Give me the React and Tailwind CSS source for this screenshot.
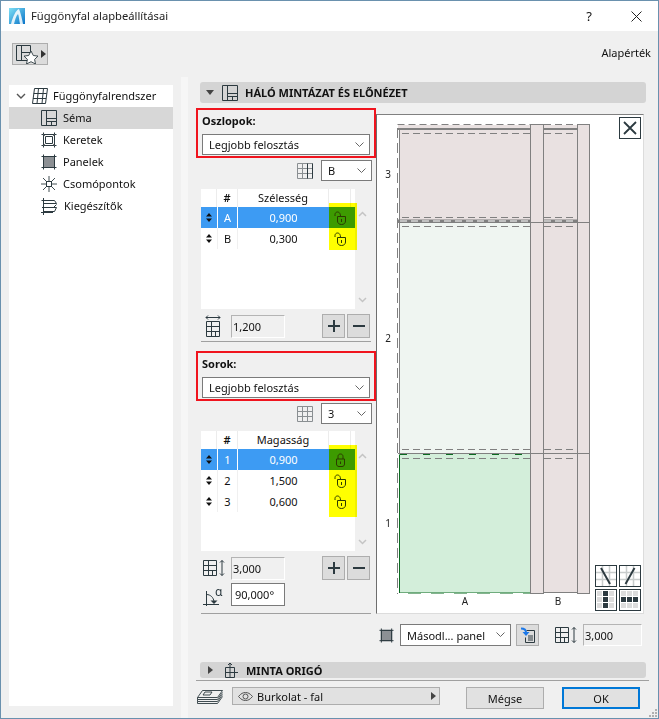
import React from "react";

const INK = "#2c3a40";

const Chevron = ({ className = "" }) => (
  <svg width="9" height="6" viewBox="0 0 9 6" className={className}>
    <polyline points="0.5,0.5 4.500,4.500 8.500,0.500" fill="none" stroke="#666" strokeWidth="1" />
  </svg>
);

const SchemaIcon = ({ size = 16 }) => (
  <svg width={size} height={size} viewBox="0 0 16 16" fill="none" stroke={INK}>
    <path d="M.5.5h15v15H.5zM5.500.5v15M5.500 8.500h10M10.500 11.500v4M5.500 11.500h10" />
  </svg>
);

const TreeRootIcon = () => (
  <svg width="17" height="17" viewBox="0 0 17 17" fill="none" stroke={INK}>
    <path d="M3.500.5h13l-2 15H1.500zM7.500.5l-1.500 15M12.500.5l-1.500 15M2.700 5.500h13M2 10.500h13" />
  </svg>
);

const FramesIcon = () => (
  <svg width="16" height="16" viewBox="0 0 16 16" fill="none" stroke={INK}>
    <path d="M2.500.5v15M13.500.5v15M.5 2.500h15M.5 13.500h15M4.500 4.500h7v7h-7z" />
    <path d="M2.500 2.500l2 2M13.500 2.500l-2 2M2.500 13.500l2-2M13.500 13.500l-2-2" stroke="#777" />
  </svg>
);

const PanelIcon = ({ size = 16 }) => (
  <svg width={size} height={size} viewBox="0 0 16 16" fill="none" stroke={INK}>
    <rect x="2.500" y="2.500" width="11" height="11" fill="#8c9094" />
    <path d="M2.500.5v15M13.500.5v15M.5 2.500h15M.5 13.500h15" />
  </svg>
);

const NodesIcon = () => (
  <svg width="16" height="16" viewBox="0 0 16 16" fill="none" stroke={INK}>
    <rect x="5.500" y="5.500" width="5" height="5" fill="#fff" />
    <path d="M8 0v5.500M8 10.500v5.500M0 8h5.500M10.500 8h5.500M2 2l3.500 3.500M14 2l-3.500 3.500M2 14l3.500-3.500M14 14l-3.500-3.500" strokeWidth=".9" />
  </svg>
);

const ExtrasIcon = () => (
  <svg width="17" height="17" viewBox="0 0 17 17" fill="none" stroke={INK}>
    <path d="M2.500 0v17M.5 2.500h13l2 3H3M15.500 6.500l-3 3H1M2.500 9.500h13l-2 4H3M0 14.500h12" />
  </svg>
);

const GridIcon = ({ cols }) => (
  <svg width="16" height="16" viewBox="0 0 16 16" fill="none" stroke="#8a8f92">
    <path d="M.5.5h15v15H.5zM5.500.5v15M10.500.5v15M.5 5.500h15M.5 10.500h15" />
    {cols && <path d="M15.500.5v15M10.500.5v15" stroke={INK} />}
  </svg>
);

const WidthTotalIcon = () => (
  <svg width="16" height="22" viewBox="0 0 16 22" fill="none" stroke={INK}>
    <path d="M1 2.500h14M3 .5l-2 2 2 2M13 .5l2 2-2 2" />
    <path d="M1.500 6.500h13v15h-13zM1.500 11.500h13M1.500 16.500h13M6.500 6.500v15M10.500 16.500v5" />
  </svg>
);

const HeightTotalIcon = () => (
  <svg width="22" height="16" viewBox="0 0 22 16" fill="none" stroke={INK}>
    <path d="M.5.500h13v15H.5zM.5 5.500h13M.5 10.500h13M5.500.500v15M9.500 10.500v5" />
    <path d="M19 .500v15M17 2.500l2-2 2 2M17 13.500l2 2 2-2" />
  </svg>
);

const AngleIcon = () => (
  <svg width="22" height="23" viewBox="0 -4 22 23" fill="none" stroke={INK}>
    <path d="M0 17.500h16M3.500 4v15M3.500 7.500c4 0 7 3 7.500 7" />
    <path d="M7.500 13.500h7l-3.500 3.500z" fill={INK} stroke="none" />
    <text x="12" y="9" fontSize="12" fill={INK} stroke="none" fontFamily="'Noto Sans', sans-serif">α</text>
  </svg>
);

const LockIcon = ({ open }) => (
  <svg width="13" height="14" viewBox="0 0 13 14" fill="none" stroke={INK}>
    {open ? (
      <path d="M1 5V3.500C1 2 2.200 1 3.500 1S6 2 6.300 3.500l.2 1.500" />
    ) : (
      <path d="M4 6V3.500C4 2 5 1 6.500 1S9 2 9 3.500V6" />
    )}
    <path
      d={open ? "M3.500 5.500h8v4.500c0 2-1.500 3.500-4 3.500s-4-1.500-4-3.500z" : "M2.500 6h8v5c0 1.500-1 2.500-2.500 2.500H5c-1.500 0-2.500-1-2.500-2.500z"}
    />
    <path d={open ? "M7.500 8v3" : "M6.500 8.500v2.500"} />
  </svg>
);

const SortHandle = () => (
  <svg width="6" height="9" viewBox="0 0 6 9" fill="#111">
    <path d="M3 0l3 3.500H0zM0 5.500h6L3 9z" />
  </svg>
);

const Select = ({ value, className = "" }) => (
  <div className={`flex h-[21px] items-center justify-between border border-[#7a7a7a] bg-white pl-[6px] pr-[5px] ${className}`}>
    <span>{value}</span>
    <Chevron />
  </div>
);

const ReadOnlyField = ({ value, className = "" }) => (
  <div className={`flex h-[23px] items-center border border-t-[#b4b4b4] border-l-[#b4b4b4] border-r-white border-b-white bg-[#f0f0f0] pl-[1px] ${className}`}>
    {value}
  </div>
);

const PlusMinus = () => (
  <div className="ml-auto flex gap-[2px]">
    <button className="flex h-[24px] w-[23px] items-center justify-center border border-[#adadad] bg-[#dcdcdc]">
      <svg width="12" height="12" viewBox="0 0 12 12" fill={INK}><path d="M5 0h2v5h5v2H7v5H5V7H0V5h5z" /></svg>
    </button>
    <button className="flex h-[24px] w-[23px] items-center justify-center border border-[#adadad] bg-[#dcdcdc]">
      <svg width="12" height="2" viewBox="0 0 12 2" fill={INK}><path d="M0 0h12v2H0z" /></svg>
    </button>
  </div>
);

const ValueTable = ({ title, rows }) => (
  <div className="relative ml-[5px] flex">
    <div className="h-[120px] w-[154px] bg-white">
      <div className="grid h-[18px] grid-cols-[16px_21px_91px_22px] text-center leading-[18px]">
        <div className="border-r border-[#ececec]" />
        <div className="border-r border-[#ececec] font-semibold">#</div>
        <div className="border-r border-[#ececec]">{title}</div>
        <div className="border-r border-[#ececec]" />
      </div>
      {rows.map((row, i) => (
        <div
          key={row.id}
          className={`grid h-[21px] grid-cols-[16px_21px_91px_22px] items-center text-center ${i === 0 ? "bg-[#3d9bf3] text-white" : ""}`}
        >
          <div className="flex h-full items-center justify-center">
            <SortHandle />
          </div>
          <div className={`flex h-full items-center justify-center border-x ${i === 0 ? "border-white" : "border-[#f0f0f0]"}`}>{row.id}</div>
          <div>{row.value}</div>
          <div className="flex justify-center pl-[1px]">
            <LockIcon open={row.open} />
          </div>
        </div>
      ))}
    </div>
    {/* yellow highlighter stroke over the lock column */}
    <div
      className={`absolute left-[128px] top-[14px] w-[28px] bg-[#ffff00] mix-blend-multiply ${rows.length === 3 ? "h-[72px]" : "h-[47px]"}`}
    />
    <div className="ml-[3px] flex h-[120px] w-[9px] flex-col justify-between pb-[6px] pt-[22px]">
      <svg width="9" height="6" viewBox="0 0 9 6"><polyline points="1,5 4.500,1.500 8,5" fill="none" stroke="#c4c4c4" strokeWidth="1.500" /></svg>
      <svg width="9" height="6" viewBox="0 0 9 6"><polyline points="1,1 4.500,4.500 8,1" fill="none" stroke="#c4c4c4" strokeWidth="1.500" /></svg>
    </div>
  </div>
);

const RedBox = ({ label }) => (
  <div className="h-[50px] w-[180px] border-2 border-[#f0141e] px-[4px]">
    <div className="flex h-[20px] items-center font-bold">{label}</div>
    <Select value="Legjobb felosztás" className="mt-[4px]" />
  </div>
);

const PreviewDrawing = () => {
  const line = "#808080";
  const dash = { stroke: line, strokeDasharray: "7 4", fill: "none" };
  return (
    <svg width="266" height="498" viewBox="377 115 266 498" className="block">
      {/* filled panels */}
      <rect x="398" y="125" width="179" height="4" fill="#e9e1e1" />
      <rect x="399" y="129" width="132" height="92" fill="#e9e1e1" />
      <rect x="399" y="223" width="132" height="230" fill="#eff5f1" />
      <rect x="399" y="454" width="132" height="139" fill="#d3eeda" />
      <path d="M399.500 454.500v138.500h131" stroke="#0a6a20" fill="none" />
      <path d="M400 454.500h130" stroke="#0a6a20" strokeDasharray="7 16" fill="none" />
      <rect x="530.500" y="124.500" width="13" height="469" fill="#e9e1e1" stroke={line} />
      <rect x="543.500" y="129.500" width="34" height="463" fill="#e9e1e1" stroke={line} />
      <rect x="577.500" y="124.500" width="12" height="469" fill="#e9e1e1" stroke={line} />
      {/* frames between rows */}
      <path d="M399.500 129v325" stroke={line} fill="none" />
      <path d="M398 129h133M544 129h33" stroke={line} strokeWidth="2" />
      <path d="M398 221h133M544 221h33" stroke={line} strokeWidth="3" />
      <path d="M400 221h131M544 221h33" stroke="#fff" strokeDasharray="7 4" strokeWidth="1" />
      <path d="M398 222.500h191M398 453.500h191" stroke={line} />
      {/* dashed edges */}
      <path d="M397.500 124.500h133M544 124.500h33" {...dash} />
      <path d="M397.500 128v466" stroke={line} strokeDasharray="10 5" fill="none" />
      <path d="M402 133.500h128M544 133.500h33M402 217.500h128M544 217.500h33M402 226.500h128M544 226.500h33M402 449.500h128M544 449.500h33M402 458.500h128M544 458.500h33" {...dash} />
      <path d="M398 593.500h132" stroke="#fff" strokeDasharray="10 13" fill="none" />
      {/* labels */}
      <g fontSize="10" fill="#222" textAnchor="middle" fontFamily="'Noto Sans', sans-serif">
        <text x="388" y="178">3</text>
        <text x="388" y="342">2</text>
        <text x="388" y="527">1</text>
        <text x="465" y="605">A</text>
        <text x="558" y="605">B</text>
      </g>
    </svg>
  );
};

const MiniBtn = ({ children }) => (
  <div className="h-[22px] w-[22px] border border-[#2c3a40] bg-white">
    <svg width="20" height="20" viewBox="0 0 20 20">{children}</svg>
  </div>
);

const gridBg = (
  <path d="M0 6.500h20M0 13.500h20M6.500 0v20M13.500 0v20" stroke="#c8cccc" strokeWidth="1.500" fill="none" />
);
const cells = (dark) =>
  [0, 1, 2].flatMap((r) =>
    [0, 1, 2].map((c) => (
      <rect
        key={`${r}${c}`}
        x={1 + c * 6}
        y={1 + r * 6}
        width="5"
        height="5"
        fill={dark(r, c) ? INK : "#dcdcdc"}
      />
    ))
  );

const MiniButtons = () => (
  <div className="absolute bottom-[2px] right-[2px] grid grid-cols-2 gap-[2px]">
    <MiniBtn>{gridBg}<path d="M5 2l9 16" stroke={INK} strokeWidth="2" /></MiniBtn>
    <MiniBtn>{gridBg}<path d="M14.500 2l-9 16" stroke={INK} strokeWidth="2" /></MiniBtn>
    <MiniBtn>{cells((r, c) => c === 1)}</MiniBtn>
    <MiniBtn>{cells((r) => r === 1)}</MiniBtn>
  </div>
);

const treeItems = [
  { label: "Séma", icon: <SchemaIcon />, selected: true },
  { label: "Keretek", icon: <FramesIcon /> },
  { label: "Panelek", icon: <PanelIcon /> },
  { label: "Csomópontok", icon: <NodesIcon /> },
  { label: "Kiegészítők", icon: <ExtrasIcon /> },
];

const App = () => {
  return (
    <div
      className="flex h-[719px] w-[659px] flex-col border border-[#6a91ae] bg-[#f0f0f0] text-[11px] leading-none text-[#111]"
      style={{ fontFamily: "'Noto Sans', sans-serif" }}
    >
      {/* Title bar */}
      <div className="flex h-[30px] shrink-0 items-center bg-white pl-[8px] pr-[16px]">
        <svg width="16" height="16" viewBox="0 0 16 16">
          <defs>
            <linearGradient id="appIcon" x1="0" x2="1" y1="0" y2="1">
              <stop offset="0" stopColor="#7fe0f5" />
              <stop offset="1" stopColor="#0a74c8" />
            </linearGradient>
          </defs>
          <rect width="16" height="16" fill="url(#appIcon)" />
          <path d="M2 16C4 8 7 2 10 1c2 5 3 10 4 15h-3C10 12 10 8 9 6 7 8 6 12 5 16z" fill="#fff" opacity=".85" />
        </svg>
        <span className="ml-[6px] text-[11.2px] text-[#222]">Függönyfal alapbeállításai</span>
        <span className="ml-auto text-[13px]">?</span>
        <svg width="11" height="11" viewBox="0 0 11 11" className="ml-[39px]">
          <path d="M.5.500l10 10M10.500.500l-10 10" stroke="#222" fill="none" />
        </svg>
      </div>

      {/* Favorites button and defaults label */}
      <div className="flex h-[46px] shrink-0 items-center pl-[11px] pr-[7px]">
        <div className="flex h-[22px] w-[36px] items-center gap-[1px] border border-[#adadad] bg-[#dcdcdc] pl-[3px]">
          <svg width="24" height="20" viewBox="0 0 24 20" fill="none" stroke={INK}>
            <path d="M.5 1.500h14v15H.5zM5.500 1.500v15M5.500 8.500h9" />
            <path d="M15 7l2.300 4.500 4.700.6-3.400 3.300.9 4.600-4.500-2.300-4.500 2.300.9-4.600L8 12.100l4.700-.6z" fill="#fff" strokeWidth=".9" />
          </svg>
          <svg width="5" height="8" viewBox="0 0 5 8" fill="#333"><path d="M0 0l5 4-5 4z" /></svg>
        </div>
        <span className="-mt-[3px] ml-auto">Alapérték</span>
      </div>

      <div className="flex min-h-0 flex-1">
        {/* Tree */}
        <div className="w-[180px] shrink-0 pl-[8px] pt-[8px]">
          <div className="h-[621px] w-[164px] bg-white">
            <div className="flex h-[22px] items-center pl-[7px]">
              <svg width="10" height="6" viewBox="0 0 10 6"><polyline points="1,1 5,5 9,1" fill="none" stroke="#555" strokeWidth="1.400" /></svg>
              <span className="ml-[5px]"><TreeRootIcon /></span>
              <span className="ml-[5px] pb-[1px]">Függönyfalrendszer</span>
            </div>
            {treeItems.map((item) => (
              <div
                key={item.label}
                className={`flex h-[22px] items-center pl-[32px] ${item.selected ? "bg-[#d7d7d7]" : ""}`}
              >
                {item.icon}
                <span className="ml-[6px] pb-[1px]">{item.label}</span>
              </div>
            ))}
          </div>
        </div>
        <div className="w-[7px] shrink-0 bg-[#f6f6f6]" />

        {/* Main page */}
        <div className="min-w-0 flex-1 pt-[5px]">
          <div className="ml-[12px] flex h-[21px] w-[446px] items-center rounded-[3px] bg-[#d4d4d4] pl-[6px]">
            <svg width="8" height="5" viewBox="0 0 8 5" fill="#444"><path d="M0 0h8L4 5z" /></svg>
            <span className="ml-[8px]"><SchemaIcon /></span>
            <span className="ml-[7px] font-bold">HÁLÓ MINTÁZAT ÉS ELŐNÉZET</span>
          </div>

          <div className="ml-[8px] mt-[5px] flex">
            {/* Grid controls */}
            <div className="w-[180px] shrink-0">
              <RedBox label="Oszlopok:" />
              <div className="mt-[2px] flex h-[21px] items-center justify-end gap-[8px] pr-[4px]">
                <GridIcon cols />
                <Select value="B" className="w-[51px]" />
              </div>
              <div className="mt-[8px]">
                <ValueTable
                  title="Szélesség"
                  rows={[
                    { id: "A", value: "0,900", open: true },
                    { id: "B", value: "0,300", open: true },
                  ]}
                />
              </div>
              <div className="ml-[9px] mt-[5px] flex h-[24px] items-center pr-[6px]">
                <WidthTotalIcon />
                <ReadOnlyField value="1,200" className="ml-[10px] w-[54px]" />
                <PlusMinus />
              </div>
              <div className="ml-[5px] mt-[3px] h-px w-[170px] bg-[#a0a0a0]" />

              <div className="mt-[9px]">
                <RedBox label="Sorok:" />
              </div>
              <div className="mt-[2px] flex h-[21px] items-center justify-end gap-[8px] pr-[4px]">
                <GridIcon />
                <Select value="3" className="w-[51px]" />
              </div>
              <div className="mt-[7px]">
                <ValueTable
                  title="Magasság"
                  rows={[
                    { id: "1", value: "0,900", open: false },
                    { id: "2", value: "1,500", open: true },
                    { id: "3", value: "0,600", open: true },
                  ]}
                />
              </div>
              <div className="ml-[7px] mt-[5px] flex h-[24px] items-center pr-[6px]">
                <HeightTotalIcon />
                <ReadOnlyField value="3,000" className="ml-[6px] w-[54px]" />
                <PlusMinus />
              </div>
              <div className="ml-[7px] mt-[3px] flex h-[23px] items-center">
                <AngleIcon />
                <div className="ml-[6px] flex h-[23px] w-[54px] items-center border border-[#7a7a7a] bg-white pl-[3px]">90,000°</div>
              </div>
              <div className="ml-[5px] mt-[7px] h-px w-[170px] bg-[#a0a0a0]" />
            </div>

            {/* Preview */}
            <div className="relative mt-[6px] h-[500px] w-[268px] border border-b-[#dcdcdc] border-l-[#6e6e6e] border-r-[#dcdcdc] border-t-[#808080] bg-white">
              <PreviewDrawing />
              <div className="absolute right-[2px] top-[2px] flex h-[22px] w-[22px] items-center justify-center border border-[#2c3a40] bg-white">
                <svg width="14" height="14" viewBox="0 0 14 14"><path d="M1 1l12 12M13 1L1 13" stroke={INK} strokeWidth="1.800" /></svg>
              </div>
              <MiniButtons />
            </div>
          </div>

          {/* Preview options */}
          <div className="mt-[10px] flex h-[22px] items-center pl-[191px]">
            <PanelIcon size={15} />
            <Select value="Másodl... panel" className="ml-[6px] h-[22px] w-[111px]" />
            <button className="ml-[5px] flex h-[22px] w-[23px] items-center justify-center border border-[#adadad] bg-[#dcdcdc]">
              <svg width="16" height="16" viewBox="0 0 16 16" fill="none">
                <path d="M6.500 3.500h8v12h-9v-5M8 9h5M8 11h5M8 13h5" stroke={INK} />
                <path d="M1 1.500c3 0 5 1 5 4" stroke="#1c78e8" strokeWidth="2" />
                <path d="M2.500 5h7l-3.500 4z" fill="#1c78e8" />
              </svg>
            </button>
            <span className="ml-[16px]"><HeightTotalIcon /></span>
            <ReadOnlyField value="3,000" className="ml-[6px] !h-[22px] w-[59px]" />
          </div>

          {/* Collapsed section */}
          <div className="ml-[12px] mt-[16px] flex h-[16px] w-[446px] items-center rounded-[3px] bg-[#d4d4d4] pl-[8px]">
            <svg width="5" height="8" viewBox="0 0 5 8" fill="#444"><path d="M0 0l5 4-5 4z" /></svg>
            <svg width="16" height="16" viewBox="0 0 16 16" fill="none" stroke={INK} className="ml-[9px]">
              <path d="M3.500 5.500h9v10h-9zM3.500 10.500h9M8 5.500v10M8 1v4M6 3l2-2 2 2M13 10.500h3" />
            </svg>
            <span className="ml-[8px] font-bold">MINTA ORIGÓ</span>
          </div>
          <div className="ml-[8px] mt-[2px] h-px w-[453px] bg-[#a0a0a0]" />

          {/* Footer */}
          <div className="relative ml-[9px] mt-[6px] flex items-start">
            <svg width="26" height="14" viewBox="0 0 26 14" fill="none" stroke={INK} strokeWidth=".9" className="mt-[3px]">
              <path d="M5.500.500h20l-5 7H.5zM.5 7.500v2h20l5-7M.5 9.500v2h20l5-7M.5 11.500v2h20l5-7M8 2h7l-2 3H6z" />
            </svg>
            <div className="ml-[9px] flex h-[18px] w-[208px] items-center border border-[#adadad] bg-[#e1e1e1] pl-[5px] pr-[3px]">
              <svg width="15" height="9" viewBox="0 0 15 9" fill="none" stroke="#555">
                <path d="M.5 4.500C3 1.500 5 .5 7.500.5s4.500 1 7 4c-2.500 3-4.500 4-7 4s-4.500-1-7-4z" />
                <circle cx="7.500" cy="4.500" r="2.500" />
              </svg>
              <span className="ml-[4px]">Burkolat - fal</span>
              <svg width="5" height="8" viewBox="0 0 5 8" fill="#444" className="ml-auto"><path d="M0 0l5 4-5 4z" /></svg>
            </div>
            <button className="ml-[26px] h-[22px] w-[78px] border border-[#adadad] bg-[#e1e1e1]">Mégse</button>
            <button className="ml-[18px] h-[22px] w-[78px] border-2 border-[#0078d7] bg-[#e1e1e1]">OK</button>
            <svg width="8" height="8" viewBox="0 0 8 8" fill="#b0b0b0" className="absolute right-[1px] top-[22px]">
              <path d="M6 0h2v2H6zM3 3h2v2H3zM6 3h2v2H6zM0 6h2v2H0zM3 6h2v2H3zM6 6h2v2H6z" />
            </svg>
          </div>
        </div>
      </div>
    </div>
  );
};

export default App;
